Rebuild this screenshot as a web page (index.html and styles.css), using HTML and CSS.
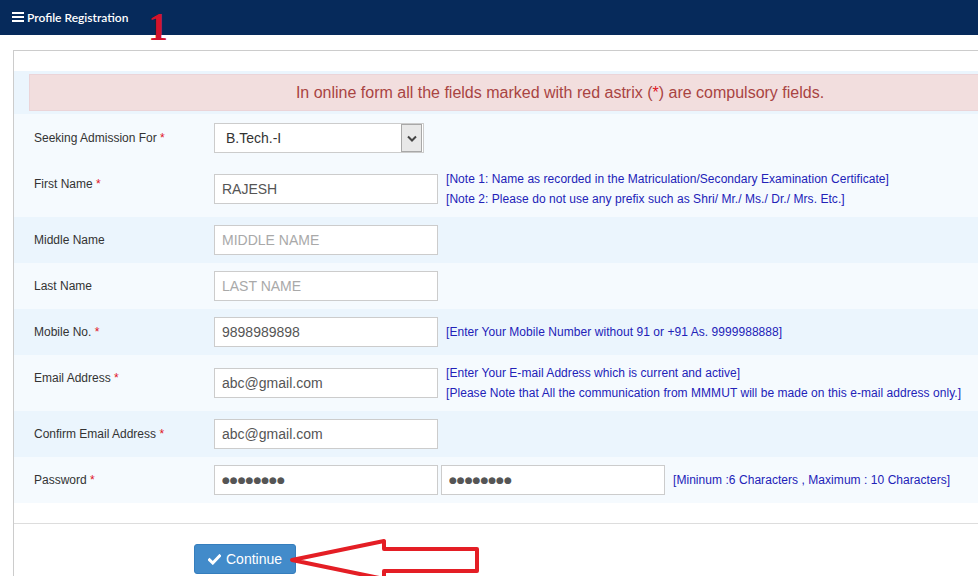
FILE: index.html
```html
<!DOCTYPE html>
<html lang="en">
<head>
<meta charset="utf-8">
<title>Profile Registration</title>
<link rel="stylesheet" href="styles.css">
</head>
<body>
<header class="topbar">
  <span class="menu-icon"><i></i><i></i><i></i></span>
  <span class="title">Profile Registration</span>
  <span class="step">1</span>
</header>

<main class="panel">
  <div class="panel-body">
    <div class="row dark alert-row">
      <div class="alert">In online form all the fields marked with red astrix (<span class="req">*</span>) are compulsory fields.</div>
    </div>

    <div class="row light">
      <label class="lbl">Seeking Admission For <span class="req">*</span></label>
      <div class="select"><span class="select-val">B.Tech.-I</span><span class="select-btn"><svg width="10" height="7" viewBox="0 0 10 7"><path d="M1 1.5 L5 5.5 L9 1.5" fill="none" stroke="#444" stroke-width="2"/></svg></span></div>
    </div>

    <div class="row light">
      <label class="lbl hi">First Name <span class="req">*</span></label>
      <input class="field" type="text" value="RAJESH">
      <div class="note">
        <div>[Note 1: Name as recorded in the Matriculation/Secondary Examination Certificate]</div>
        <div>[Note 2: Please do not use any prefix such as Shri/ Mr./ Ms./ Dr./ Mrs. Etc.]</div>
      </div>
    </div>

    <div class="row dark">
      <label class="lbl">Middle Name</label>
      <input class="field" type="text" placeholder="MIDDLE NAME">
    </div>

    <div class="row light">
      <label class="lbl">Last Name</label>
      <input class="field" type="text" placeholder="LAST NAME">
    </div>

    <div class="row dark">
      <label class="lbl">Mobile No. <span class="req">*</span></label>
      <input class="field" type="text" value="9898989898">
      <div class="note"><div>[Enter Your Mobile Number without 91 or +91 As. 9999988888]</div></div>
    </div>

    <div class="row light">
      <label class="lbl hi">Email Address <span class="req">*</span></label>
      <input class="field" type="text" value="abc@gmail.com">
      <div class="note">
        <div>[Enter Your E-mail Address which is current and active]</div>
        <div>[Please Note that All the communication from MMMUT will be made on this e-mail address only.]</div>
      </div>
    </div>

    <div class="row dark">
      <label class="lbl">Confirm Email Address <span class="req">*</span></label>
      <input class="field" type="text" value="abc@gmail.com">
    </div>

    <div class="row light">
      <label class="lbl">Password <span class="req">*</span></label>
      <input class="field pw" type="text" value="●●●●●●●●">
      <input class="field pw second" type="text" value="●●●●●●●●">
      <div class="note"><div>[Mininum :6 Characters , Maximum : 10 Characters]</div></div>
    </div>
  </div>

  <div class="panel-footer">
    <button class="btn" type="button">
      <svg class="check" width="13" height="11" viewBox="0 0 13 11"><path d="M1.5 5.8 L4.8 9 L11.5 2" fill="none" stroke="#fff" stroke-width="3" stroke-linecap="square"/></svg>
      Continue
    </button>
  </div>
</main>

<svg class="arrow" width="200" height="50" viewBox="0 0 200 50">
  <polygon points="4,24 96,5 96,13 189,13 189,35 96,35 96,43" fill="#fff" stroke="#e41e25" stroke-width="4" stroke-linejoin="round"/>
</svg>
</body>
</html>
```

FILE: styles.css
```css
html, body {
  margin: 0;
  padding: 0;
  overflow: hidden;
  background: #fff;
  font-family: Arial, "Liberation Sans", sans-serif;
}

.topbar {
  position: relative;
  height: 35px;
  background: #062a5b;
  display: flex;
  align-items: center;
  padding-left: 12px;
  color: #fff;
}

.menu-icon {
  display: flex;
  flex-direction: column;
  gap: 2px;
  width: 12px;
  margin-right: 3px;
  margin-top: -1px;
}
.menu-icon i {
  display: block;
  height: 2px;
  background: #fff;
}

.title {
  font-family: Lato, "Open Sans", sans-serif;
  font-size: 12px;
  font-weight: 600;
  letter-spacing: 0;
  margin-top: -1px;
}

.step {
  position: absolute;
  left: 148px;
  top: 4px;
  font-family: "Liberation Serif", serif;
  font-weight: bold;
  font-size: 40px;
  line-height: 46px;
  color: #d4132c;
}

.panel {
  margin: 15px 0 0 13px;
  width: 1093px;
  border-top: 1px solid #ccc;
  border-left: 1px solid #ccc;
  box-sizing: border-box;
}

.panel-body {
  padding: 20px 0;
}

.row {
  display: flex;
  align-items: center;
  padding: 8px 0;
}
.row.dark { background: #ebf5fd; }
.row.light { background: #f5fafe; }

.alert-row {
  padding: 3px 15px;
}
.alert {
  flex: 1;
  height: 35px;
  line-height: 35px;
  background: #f2dede;
  border: 1px solid #ebd4d8;
  color: #a94442;
  font-size: 16px;
  text-align: center;
}

.lbl {
  width: 180px;
  padding-left: 20px;
  font-size: 12px;
  color: #333;
}
.lbl.hi {
  margin-bottom: 10px;
}
.req {
  color: #e0141e;
}

.select {
  display: flex;
  align-items: center;
  width: 210px;
  height: 30px;
  box-sizing: border-box;
  border: 1px solid #ccc;
  background: #fff;
  margin: 1px 0 0;
}
.select-val {
  flex: 1;
  padding-left: 11px;
  font-size: 14px;
  color: #333;
}
.select-btn {
  width: 19px;
  height: 26px;
  margin-right: 1px;
  border: 1px solid #a8a8a8;
  background: #e8e8e8;
  display: flex;
  align-items: center;
  justify-content: center;
}

.field {
  width: 224px;
  height: 30px;
  box-sizing: border-box;
  margin: 0;
  border: 1px solid #ccc;
  border-radius: 0;
  background: #fff;
  padding: 0 7px;
  font-family: Arial, "Liberation Sans", sans-serif;
  font-size: 14px;
  color: #555;
  outline: none;
}
.field::placeholder {
  color: #a9a9a9;
}
.field.pw {
  font-family: "DejaVu Sans", sans-serif;
  font-size: 9px;
  letter-spacing: 0;
  color: #555;
}
.field.second {
  margin-left: 3px;
}

.note {
  margin-left: 8px;
  font-size: 12px;
  line-height: 20px;
  letter-spacing: 0.05px;
  color: #2222b8;
}

.panel-footer {
  border-top: 1px solid #ddd;
  padding: 20px 0 20px 180px;
}

.btn {
  display: flex;
  align-items: center;
  gap: 5px;
  height: 30px;
  width: 102px;
  padding: 0 0 0 13px;
  border: 1px solid #357ebd;
  border-radius: 3px;
  background: #428bca;
  color: #fff;
  font-family: Arial, "Liberation Sans", sans-serif;
  font-size: 14px;
}

.arrow {
  position: absolute;
  left: 288px;
  top: 536px;
}
```
